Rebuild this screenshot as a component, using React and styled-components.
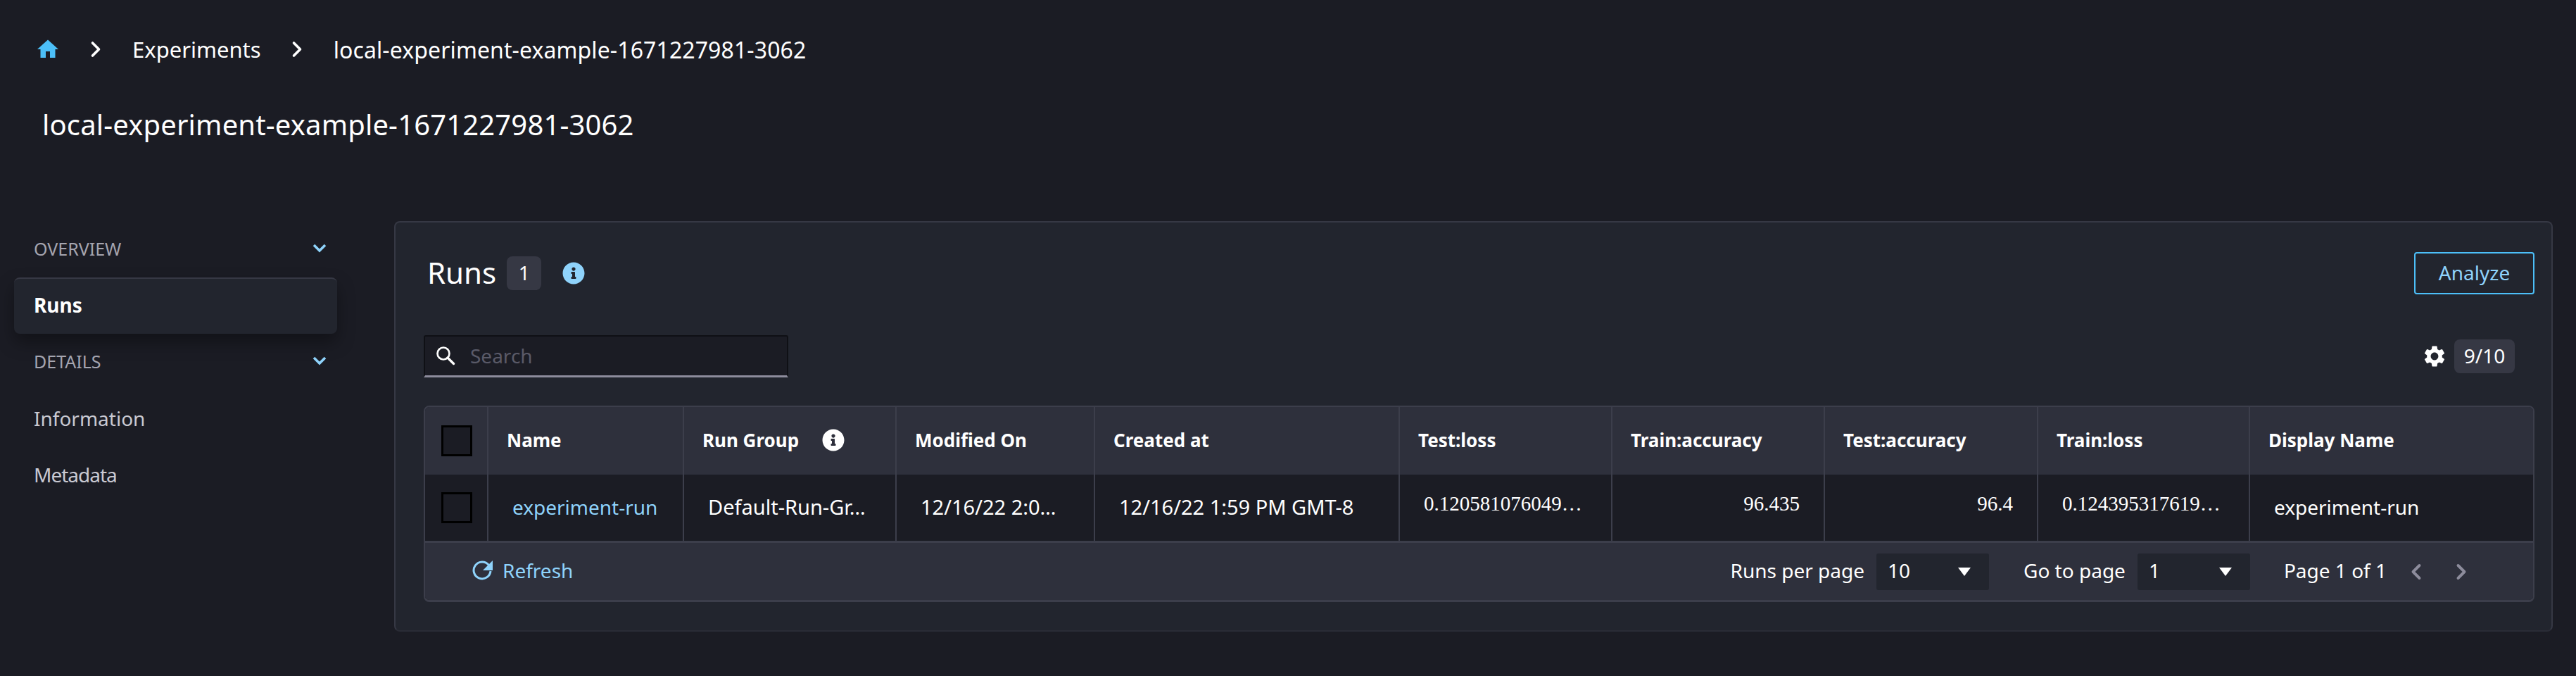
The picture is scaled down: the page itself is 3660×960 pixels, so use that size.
import React from 'react';
import styled, { createGlobalStyle } from 'styled-components';
import { ChevronLeft, ChevronRight } from 'lucide-react';
import { FaInfoCircle } from 'react-icons/fa';
import { MdHome, MdSettings } from 'react-icons/md';

const GlobalStyle = createGlobalStyle`
    html, body {
        margin: 0;
        background: #1b1c24;
        color: #fff;
        font-family: "Noto Sans", "Open Sans", sans-serif;
    }
    * {
        box-sizing: border-box;
    }
`;

const Page = styled.div`
    width: 3660px;
    height: 960px;
    overflow: hidden;
`;

const Crumbs = styled.nav`
    display: flex;
    align-items: center;
    height: 40px;
    margin-top: 50px;
    padding-left: 50px;
    font-size: 31px;
`;

const CrumbSep = styled.span`
    display: flex;
    width: 36px;
    justify-content: center;
    margin: ${(p) => p.$margin};
`;

const CrumbCurrent = styled.span`
    font-size: 32px;
    letter-spacing: 0.1px;
`;

const Title = styled.h1`
    height: 60px;
    margin: 58px 0 106px;
    padding-left: 60px;
    font-size: 40px;
    font-weight: 400;
    line-height: 58px;
    letter-spacing: 0.15px;
`;

const Layout = styled.div`
    display: flex;
    padding: 0 33px 0 20px;
`;

const Sidebar = styled.aside`
    width: 459px;
    margin-right: 81px;
    padding-top: 20px;
    flex-shrink: 0;
`;

const SectionHead = styled.div`
    display: flex;
    align-items: center;
    justify-content: space-between;
    height: 40px;
    margin: ${(p) => p.$margin};
    padding: 0 15px 3px 28px;
    font-size: 25px;
    color: #a5a5b0;
`;

const NavItem = styled.div`
    display: flex;
    align-items: center;
    height: 80px;
    padding: 0 0 5px 28px;
    font-size: 28px;
    font-weight: ${(p) => (p.$active ? 700 : 400)};
    letter-spacing: ${(p) => p.$spacing || 0}px;
    color: ${(p) => (p.$active ? '#fff' : '#c9c9d2')};
    ${(p) =>
        p.$active &&
        `
        background: #22252e;
        border-top: 2px solid #363844;
        border-radius: 8px;
        box-shadow: 0 12px 24px rgba(0, 0, 0, 0.35);
    `}
`;

const Panel = styled.section`
    flex: 1;
    padding: 42px 24px 40px 40px;
    background: #22252e;
    border: 2px solid #363844;
    border-bottom-color: #2a2c36;
    border-radius: 8px;
`;

const PanelHead = styled.div`
    display: flex;
    align-items: center;
    justify-content: space-between;
    height: 60px;
    padding-left: 5px;
`;

const HeadLeft = styled.div`
    display: flex;
    align-items: center;
`;

const PanelTitle = styled.h2`
    margin: 0 15px 3px 0;
    font-size: 42px;
    font-weight: 400;
`;

const Badge = styled.span`
    display: flex;
    align-items: center;
    justify-content: center;
    width: ${(p) => p.$width}px;
    height: 48px;
    padding-bottom: 3px;
    background: #363844;
    border-radius: 8px;
    font-size: 28px;
`;

const InfoIcon = styled(FaInfoCircle)`
    width: 32px;
    height: 32px;
    margin-left: ${(p) => p.$gap}px;
    color: ${(p) => p.$color};
`;

const AnalyzeButton = styled.button`
    width: 171px;
    height: 60px;
    padding: 0 0 3px;
    background: transparent;
    border: 2px solid #4cbff8;
    border-radius: 4px;
    font: inherit;
    font-size: 28px;
    color: #8fd3fb;
`;

const Toolbar = styled.div`
    display: flex;
    align-items: center;
    justify-content: space-between;
    margin: 58px 0 40px;
    padding-right: 28px;
`;

const SearchBox = styled.div`
    display: flex;
    align-items: center;
    width: 518px;
    height: 60px;
    padding: 0 0 2px 15px;
    background: #1b1c24;
    border: solid #0f1015;
    border-width: 2px 2px 0 2px;
    border-bottom: 3px solid #8d8c9c;
    border-radius: 3px 3px 0 0;
    font-size: 28px;
    color: #5a5a68;
`;

const SearchText = styled.span`
    margin-left: 21px;
`;

const Columns = styled.div`
    display: flex;
    align-items: center;
    gap: 10px;
`;

const GearIcon = styled(MdSettings)`
    width: 36px;
    height: 36px;
`;

const Table = styled.div`
    border: 2px solid #3c3e4b;
    border-width: 2px 2px 3px 2px;
    border-radius: 8px;
    overflow: hidden;
`;

const Row = styled.div`
    display: grid;
    grid-template-columns: 90px 278px 302px 282px 433px 302px 302px 303px 301px 1fr;
    height: ${(p) => p.$height}px;
    background: ${(p) => p.$bg};
`;

const HeadCell = styled.div`
    display: flex;
    align-items: center;
    padding: 0 0 3px 26px;
    border-right: 2px solid #3c3e4b;
    font-size: 26px;
    font-weight: 700;
    &:last-child {
        border-right: 0;
    }
`;

const BodyCell = styled.div`
    display: flex;
    align-items: ${(p) => (p.$number ? 'flex-start' : 'center')};
    justify-content: ${(p) => (p.$right ? 'flex-end' : 'flex-start')};
    padding: ${(p) => (p.$number ? '25px 34px 0' : '0 34px 3px')};
    border-right: 2px solid #3c3e4b;
    font-family: ${(p) => (p.$number ? '"Liberation Serif", serif' : 'inherit')};
    font-size: ${(p) => p.$size || 28}px;
    color: ${(p) => (p.$link ? '#8fd3fb' : '#fff')};
    white-space: nowrap;
    &:last-child {
        border-right: 0;
    }
`;

const CheckCell = styled.div`
    display: flex;
    align-items: center;
    justify-content: center;
    padding-left: 2px;
    border-right: 2px solid #3c3e4b;
`;

const Checkbox = styled.span`
    display: block;
    width: 44px;
    height: 44px;
    background: ${(p) => p.$fill};
    border: 3px solid #000;
`;

const Footer = styled.div`
    display: flex;
    align-items: center;
    justify-content: space-between;
    height: 84px;
    padding: 0 84px 3px 67px;
    background: #2e303c;
    border-top: 3px solid #3c3e4b;
    font-size: 28px;
`;

const Refresh = styled.div`
    display: flex;
    align-items: center;
    gap: 13px;
    color: #8fd3fb;
`;

const Pager = styled.div`
    display: flex;
    align-items: center;
`;

const Select = styled.div`
    position: relative;
    display: flex;
    align-items: center;
    width: 160px;
    height: 52px;
    margin: 3px ${(p) => p.$after}px 0 17px;
    padding: 0 0 3px 16px;
    background: #22252e;
    border-radius: 3px;
    &::after {
        content: '';
        position: absolute;
        top: 20px;
        right: 26px;
        border-left: 9px solid transparent;
        border-right: 9px solid transparent;
        border-top: 12px solid #fff;
    }
`;

const PageArrows = styled.div`
    display: flex;
    align-items: center;
    gap: 28px;
    margin: 3px 0 0 24px;
    color: #8d8c9c;
`;

const columns = ['Test:loss', 'Train:accuracy', 'Test:accuracy', 'Train:loss', 'Display Name'];

const SearchIcon = () => (
    <svg width="28" height="28" viewBox="0 0 28 28" fill="none" stroke="#fff">
        <circle cx="11" cy="11" r="8.5" strokeWidth="2.6" />
        <path d="M17 17l8.5 8.5" strokeWidth="3.4" strokeLinecap="round" />
    </svg>
);

const RefreshIcon = () => (
    <svg width="30" height="30" viewBox="0 0 30 30" fill="none">
        <path d="M23.5 7.5A12 12 0 1 0 26 16" stroke="#8fd3fb" strokeWidth="3" />
        <path d="M29 1v14H15z" fill="#8fd3fb" />
    </svg>
);

const SectionChevron = () => (
    <svg width="20" height="14" viewBox="0 0 20 14" fill="none">
        <path d="M2 2l8 8 8-8" stroke="#8fd3fb" strokeWidth="3.6" />
    </svg>
);

const App = () => (
    <Page>
        <GlobalStyle />
        <Crumbs>
            <MdHome size={36} color="#4cbff8" />
            <CrumbSep $margin="0 34px 0 32px"><ChevronRight size={36} strokeWidth={2.4} /></CrumbSep>
            <span>Experiments</span>
            <CrumbSep $margin="0 34px 0 33px"><ChevronRight size={36} strokeWidth={2.4} /></CrumbSep>
            <CrumbCurrent>local-experiment-example-1671227981-3062</CrumbCurrent>
        </Crumbs>
        <Title>local-experiment-example-1671227981-3062</Title>
        <Layout>
            <Sidebar>
                <SectionHead $margin="0 0 20px">
                    OVERVIEW
                    <SectionChevron />
                </SectionHead>
                <NavItem $active>Runs</NavItem>
                <SectionHead $margin="20px 0 22px">
                    DETAILS
                    <SectionChevron />
                </SectionHead>
                <NavItem>Information</NavItem>
                <NavItem $spacing={-1}>Metadata</NavItem>
            </Sidebar>
            <Panel>
                <PanelHead>
                    <HeadLeft>
                        <PanelTitle>Runs</PanelTitle>
                        <Badge $width={49}>1</Badge>
                        <InfoIcon $gap={30} $color="#8fd3fb" />
                    </HeadLeft>
                    <AnalyzeButton>Analyze</AnalyzeButton>
                </PanelHead>
                <Toolbar>
                    <SearchBox>
                        <SearchIcon />
                        <SearchText>Search</SearchText>
                    </SearchBox>
                    <Columns>
                        <GearIcon />
                        <Badge $width={86}>9/10</Badge>
                    </Columns>
                </Toolbar>
                <Table>
                    <Row $height={96} $bg="#2e303c">
                        <CheckCell><Checkbox $fill="#1b1c24" /></CheckCell>
                        <HeadCell>Name</HeadCell>
                        <HeadCell>
                            Run Group
                            <InfoIcon $gap={33} $color="#fff" />
                        </HeadCell>
                        <HeadCell>Modified On</HeadCell>
                        <HeadCell>Created at</HeadCell>
                        {columns.map((name) => (
                            <HeadCell key={name}>{name}</HeadCell>
                        ))}
                    </Row>
                    <Row $height={94} $bg="#1b1c24">
                        <CheckCell><Checkbox $fill="transparent" /></CheckCell>
                        <BodyCell $link>experiment-run</BodyCell>
                        <BodyCell $size={29}>Default-Run-Gr…</BodyCell>
                        <BodyCell $size={29}>12/16/22 2:0…</BodyCell>
                        <BodyCell $size={29}>12/16/22 1:59 PM GMT-8</BodyCell>
                        <BodyCell $number $size={29}>0.120581076049…</BodyCell>
                        <BodyCell $number $right $size={29}>96.435</BodyCell>
                        <BodyCell $number $right $size={29}>96.4</BodyCell>
                        <BodyCell $number $size={29}>0.124395317619…</BodyCell>
                        <BodyCell>experiment-run</BodyCell>
                    </Row>
                    <Footer>
                        <Refresh>
                            <RefreshIcon />
                            Refresh
                        </Refresh>
                        <Pager>
                            <span>Runs per page</span>
                            <Select $after={49}>10</Select>
                            <span>Go to page</span>
                            <Select $after={48}>1</Select>
                            <span>Page 1 of 1</span>
                            <PageArrows>
                                <ChevronLeft size={36} strokeWidth={2.6} />
                                <ChevronRight size={36} strokeWidth={2.6} />
                            </PageArrows>
                        </Pager>
                    </Footer>
                </Table>
            </Panel>
        </Layout>
    </Page>
);

export default App;
